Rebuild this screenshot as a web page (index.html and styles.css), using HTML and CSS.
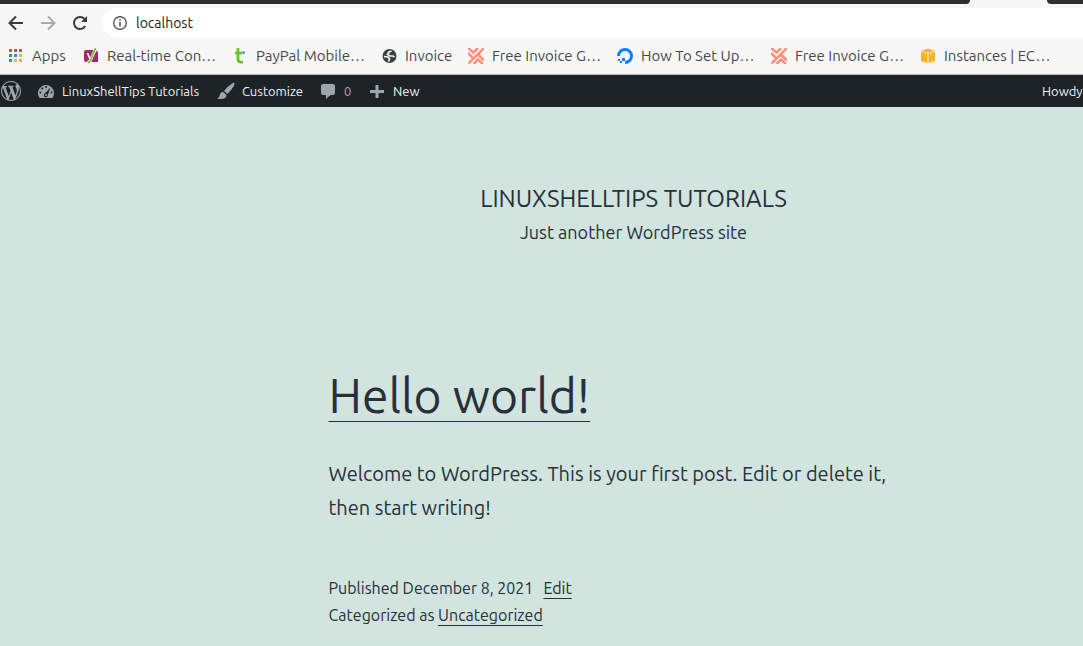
FILE: index.html
```html
<!DOCTYPE html>
<html lang="en">
<head>
<meta charset="utf-8">
<meta name="viewport" content="width=device-width, initial-scale=1">
<title>LinuxShellTips Tutorials</title>
<link rel="stylesheet" href="styles.css">
</head>
<body>
<svg class="defs" aria-hidden="true">
  <symbol id="weave" viewBox="0 0 16 16"><g fill="none" stroke="#ff8f7c" stroke-width="2.500"><path d="M0 0l5.500 4.500L10 0M16 0L.5 15.500M0 5l4.500 4.500M10 6.500l6 6M5.500 16l4.500-4.500 5 4.500"/></g></symbol>
</svg>
<header class="browser">
  <div class="tabs"><span class="tab-left"></span><span class="tab-right"></span></div>
  <div class="toolbar">
    <button class="nav" aria-label="Back"><svg width="16" height="16" viewBox="0 0 16 16"><path d="M15 8H2M8 1.500L1.500 8 8 14.500" fill="none" stroke="#3c3c3f" stroke-width="2"/></svg></button>
    <button class="nav" aria-label="Forward"><svg width="16" height="16" viewBox="0 0 16 16"><path d="M1 8h13M8 1.500L14.500 8 8 14.500" fill="none" stroke="#aaa" stroke-width="2"/></svg></button>
    <button class="nav" aria-label="Reload"><svg width="16" height="16" viewBox="0 0 16 16"><path d="M13.200 11A6 6 0 1 1 12.500 4" fill="none" stroke="#3c3c3f" stroke-width="2"/><path d="M15 1v6H9z" fill="#3c3c3f"/></svg></button>
    <label class="address">
      <svg width="16" height="16" viewBox="0 0 16 16"><circle cx="8" cy="8" r="6.300" fill="none" stroke="#55585c" stroke-width="1.400"/><path d="M8 7v4.500M8 4.200v1.600" stroke="#55585c" stroke-width="1.600"/></svg>
      <input type="text" value="localhost" aria-label="Address">
    </label>
  </div>
  <nav class="bookmarks" aria-label="Bookmarks">
    <a href="#" class="apps"><svg width="16" height="16" viewBox="0 0 16 16"><path d="M1 1h3v3H1zM6 1h3v3H6zM11 1h3v3h-3z" fill="#ee4035"/><path d="M1 6h3v3H1zM1 11h3v3H1z" fill="#30a05a"/><path d="M6 6h3v3H6z" fill="#3b82f0"/><path d="M11 6h3v3h-3zM6 11h3v3H6zM11 11h3v3h-3z" fill="#f8b51c"/></svg>Apps</a>
    <a href="#" class="wide"><svg width="16" height="16" viewBox="0 0 16 16"><path d="M3 2h9.500L15 4v10H3a2 2 0 0 1-2-2V4a2 2 0 0 1 2-2z" fill="#a4286a"/><path d="M4.500 5l2.500 6" stroke="#fff" stroke-width="1.600" fill="none"/><path d="M12.500 1L8 11q-1 3-3.500 3.500" stroke="#fff" stroke-width="3" fill="none"/><path d="M12.500 0L8 11q-1 3-3 4" stroke="#7cc32c" stroke-width="1.800" fill="none"/></svg>Real-time Con…</a>
    <a href="#" class="wide"><svg width="16" height="16" viewBox="0 0 16 16"><path d="M6 0v11q0 3.200 3 3.200h2M3 5.200h7" stroke="#6fc22e" stroke-width="2.800" fill="none"/><circle cx="11.500" cy="4.500" r="1.500" fill="#3a9bd8"/></svg>PayPal Mobile…</a>
    <a href="#" class="short"><svg width="16" height="16" viewBox="0 0 16 16"><circle cx="8.500" cy="8" r="7" fill="#3c4043"/><path d="M10.500 3L8 4 6.500 6.500 9 8h3l1.500 1M3 8.500l4 .5 1.500 2-1 2.500" fill="none" stroke="#f7f7f7" stroke-width="1.700"/></svg>Invoice</a>
    <a href="#" class="wide"><svg width="16" height="16"><use href="#weave"/></svg>Free Invoice G…</a>
    <a href="#" class="wider"><svg width="16" height="16" viewBox="0 0 16 16"><path d="M1.500 8A6.500 6.500 0 1 1 8 14.500" fill="none" stroke="#0a80ff" stroke-width="3"/><path d="M5 10h3v3H5zM3 13h2v2H3zM1 11h2v2H1z" fill="#0a80ff"/></svg>How To Set Up…</a>
    <a href="#" class="wide"><svg width="16" height="16"><use href="#weave"/></svg>Free Invoice G…</a>
    <a href="#" class="wide"><svg width="16" height="16" viewBox="0 0 16 16"><path d="M1 3l6-2h2l6 2v10l-6 2H7l-6-2z" fill="#f6b326"/><path d="M1 3.500l7 2 7-2M8 5.500V15" fill="none" stroke="#fff2cf" stroke-width="1"/></svg>Instances | EC…</a>
  </nav>
</header>
<nav class="adminbar" aria-label="Toolbar">
  <a href="#" class="wp" aria-label="About WordPress"><svg width="20" height="20" viewBox="0 0 20 20"><path fill="#a0a5aa" d="M20 10c0-5.510-4.490-10-10-10C4.480 0 0 4.490 0 10c0 5.520 4.480 10 10 10 5.510 0 10-4.480 10-10zM7.780 15.370L4.370 6.220c.55-.02 1.170-.08 1.170-.08.5-.06.44-1.130-.06-1.110 0 0-1.450.11-2.370.11-.18 0-.37 0-.58-.01C4.120 2.690 6.870 1.110 10 1.110c2.330 0 4.450.87 6.050 2.340-.68-.11-1.650.39-1.650 1.580 0 .74.45 1.360.9 2.100.35.61.55 1.360.55 2.460 0 1.490-1.400 5-1.400 5l-3.030-8.370c.54-.02.82-.17.82-.17.5-.05.44-1.250-.06-1.220 0 0-1.440.12-2.380.12-.87 0-2.330-.12-2.330-.12-.5-.03-.56 1.200-.06 1.220l.92.08 1.260 3.410zM17.410 10c.24-.64.74-1.870.43-4.250.7 1.290 1.050 2.710 1.050 4.250 0 3.290-1.730 6.240-4.400 7.780.97-2.590 1.940-5.200 2.920-7.780zM6.100 18.090C3.120 16.650 1.110 13.530 1.110 10c0-1.300.23-2.480.72-3.590C3.250 10.300 4.670 14.200 6.100 18.090zm4.030-6.630l2.580 6.980c-.86.29-1.760.45-2.710.45-.79 0-1.570-.11-2.290-.33.81-2.380 1.620-4.740 2.420-7.100z"/></svg></a>
  <a href="#" class="site"><svg width="20" height="20" viewBox="0 0 20 20"><path fill="#a0a5aa" d="M3.700 17A8 8 0 1 1 16.300 17z"/><g fill="#1d2327"><circle cx="10" cy="6" r="1"/><circle cx="6.300" cy="7.500" r="1"/><circle cx="4.400" cy="11.500" r="1"/><circle cx="15.600" cy="11.500" r="1"/><path d="M14.500 6.500L11.800 14a2 2 0 1 1-3-1.500z"/></g><circle cx="10" cy="14" r="1" fill="#a0a5aa"/></svg>LinuxShellTips Tutorials</a>
  <a href="#" class="customize"><svg width="20" height="20" viewBox="0 0 20 20"><path fill="#a0a5aa" d="M18.300 2q.8.500-.5 3-2.500 4.500-6.500 8L8 10q4-5 8-7.500 1.700-1 2.300-.5zM7 10.800l3.400 3.200q.3 2.200-1.800 3.300-3.500 1.300-7.400.2 2.300-.8 2.600-3.500.4-2.700 3.200-3.200z"/></svg>Customize</a>
  <a href="#" class="comments"><svg width="20" height="20" viewBox="0 0 20 20"><path fill="#a0a5aa" d="M5 3h10a2 2 0 0 1 2 2v7a2 2 0 0 1-2 2h-2.500L8 18v-4H5a2 2 0 0 1-2-2V5a2 2 0 0 1 2-2z"/></svg>0</a>
  <a href="#" class="new"><svg width="20" height="20" viewBox="0 0 20 20"><path fill="#a0a5aa" d="M8.500 4h3v5H17v3h-5.500v5h-3v-5H3V9h5.500z"/></svg>New</a>
  <a href="#" class="howdy">Howdy</a>
</nav>
<main class="page">
  <header class="masthead">
    <h1>LinuxShellTips Tutorials</h1>
    <p>Just another WordPress site</p>
  </header>
  <article class="post">
    <h2><a href="#">Hello world!</a></h2>
    <p class="excerpt">Welcome to WordPress. This is your first post. Edit or delete it, then start writing!</p>
    <footer class="meta">
      <div class="published"><span>Published December 8, 2021</span><a href="#">Edit</a></div>
      <div>Categorized as <a href="#">Uncategorized</a></div>
    </footer>
  </article>
</main>
</body>
</html>
```
FILE: styles.css
```css
* { box-sizing: border-box; }
body {
  margin: 0;
  min-height: 100vh;
  display: flex;
  flex-direction: column;
  overflow: hidden;
  font-family: Ubuntu, "Noto Sans", "Open Sans", sans-serif;
  font-weight: 400;
  color: #28303d;
}
h1, h2, p { margin: 0; font-weight: inherit; }
a { color: inherit; text-decoration: none; white-space: nowrap; }
svg { flex: none; display: block; }
.defs { display: none; }

.browser { background: #f7f7f7; border-bottom: 1px solid #b8b8b8; }
.tabs { display: flex; justify-content: space-between; height: 4px; }
.tab-left { flex: 1; margin-right: 77px; background: #302d2f; border-bottom-right-radius: 4px; }
.tab-right { width: 36px; background: #302d2f; border-bottom-left-radius: 4px; }
.toolbar { display: flex; align-items: center; gap: 16px; padding: 4px 0 0 8px; }
.nav { width: 16px; height: 16px; padding: 0; border: 0; background: none; }
.address {
  flex: 1;
  display: flex;
  align-items: center;
  gap: 8px;
  height: 30px;
  margin-left: -2px;
  padding-left: 10px;
  background: #fff;
  border-radius: 15px 0 0 15px;
}
.address input {
  flex: 1;
  min-width: 0;
  padding: 0;
  border: 0;
  outline: 0;
  background: none;
  font: inherit;
  font-size: 14px;
  line-height: 20px;
  color: #202124;
}
.bookmarks {
  display: flex;
  align-items: center;
  gap: 16px;
  height: 36px;
  padding-left: 8px;
  font-size: 15px;
  line-height: 20px;
  color: #48494c;
}
.bookmarks a { display: flex; align-items: center; gap: 8px; flex: none; }
.apps { width: 59px; }
.wide { width: 133px; }
.wider { width: 138px; }
.short { width: 71px; }

.adminbar {
  display: flex;
  align-items: center;
  height: 32px;
  background: #1d2327;
  color: #f0f0f1;
  font-size: 13px;
  line-height: 32px;
}
.adminbar a { display: flex; align-items: center; gap: 6px; flex: none; }
.wp { width: 36px; padding-left: 1px; }
.site { width: 180px; }
.customize { width: 102px; }
.comments { width: 49px; color: #a0a5aa; }
.adminbar .howdy { width: 41px; margin-left: auto; }

.page { flex: 1; padding: 74px 0 16px 184px; background: #d1e4dd; }
.masthead { text-align: center; }
.masthead h1 { font-size: 24px; line-height: 36px; text-transform: uppercase; }
.masthead p { font-size: 18px; line-height: 30px; }
.post { max-width: 610px; margin: 116px auto 0; }
.post h2 { font-size: 48px; line-height: 64px; }
.post h2 a, .meta a { text-decoration: underline 1px; }
.post h2 a { text-underline-offset: 8px; }
.excerpt { max-width: 600px; margin-top: 30px; font-size: 20px; line-height: 34px; }
.meta { margin-top: 50px; font-size: 16px; line-height: 27px; }
.meta a { text-underline-offset: 4px; }
.published { display: flex; gap: 10px; }
```
